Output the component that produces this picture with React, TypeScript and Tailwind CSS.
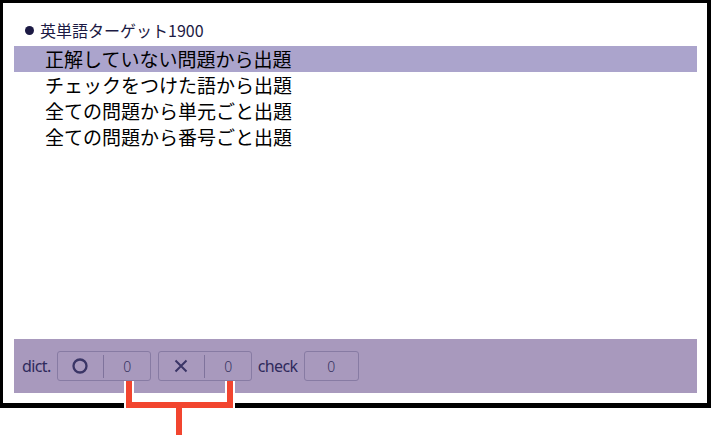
import React from 'react';

const items = [
  '正解していない問題から出題',
  'チェックをつけた語から出題',
  '全ての問題から単元ごと出題',
  '全ての問題から番号ごと出題',
];

const jp = 'font-["Noto_Sans_CJK_JP","Noto_Sans",sans-serif]';

function CountBox({ mark }: { mark?: 'o' | 'x' }) {
  return (
    <div
      className={`flex items-center h-[30px] rounded-[3px] border border-[#877ba3] ${mark ? 'w-[94px]' : 'w-[55px]'}`}
    >
      {mark && (
        <>
          <div className="flex-1 flex items-center justify-center">
            {mark === 'o' ? (
              <svg width="16" height="16" viewBox="0 0 16 16">
                <circle cx="8" cy="8" r="6.5" fill="none" stroke="#3a3566" strokeWidth="2.3" />
              </svg>
            ) : (
              <svg width="16" height="16" viewBox="0 0 16 16">
                <path d="M2.5 2.5 L13.5 13.5 M13.5 2.5 L2.5 13.5" stroke="#3a3566" strokeWidth="2" />
              </svg>
            )}
          </div>
          <div className="w-px h-[23px] bg-[#7f739c]" />
        </>
      )}
      <div className="flex-1 flex items-center justify-center text-[14px] text-[#36325f] font-['Noto_Sans',sans-serif] font-light">
        0
      </div>
    </div>
  );
}

export default function App() {
  return (
    <div className="relative w-[712px] h-[435px] bg-white overflow-hidden">
      <div className="w-[711px] h-[408px] border-black border-l-[3px] border-t-[3px] border-r-4 border-b-[5px] flex flex-col pl-[11px] pr-[10px]">
        <div className={`pt-[16px] h-[38px] flex items-center gap-[6px] pl-[11px] text-[16px] leading-[22px] text-[#1c1a44] ${jp}`}>
          <span className="w-[9px] h-[9px] shrink-0 rounded-full bg-[#1c1a44]" />
          <span>英単語ターゲット1900</span>
        </div>
        <div className="mt-[5px] flex flex-col">
          {items.map((t, i) => (
            <div
              key={t}
              className={`h-[26px] flex items-center pl-[31px] text-[19px] text-black ${jp} ${i === 0 ? 'bg-[#aba4cc]' : ''}`}
            >
              {t}
            </div>
          ))}
        </div>
        <div className="flex-1" />
        <div className="h-[54px] mb-[10px] bg-[#a899bd] flex items-center pl-[8px] text-[16px] text-[#2f2a5c] font-['Noto_Sans',sans-serif] tracking-[-0.6px]">
          <span className="mr-[6px]">dict.</span>
          <CountBox mark="o" />
          <div className="w-[7px]" />
          <CountBox mark="x" />
          <span className="ml-[6px] mr-[6px]">check</span>
          <CountBox />
        </div>
      </div>
      <svg className="absolute left-0 top-0" width="712" height="435" viewBox="0 0 712 435">
        <path d="M129 381 V405 H230 V381 M179 405 V435" fill="none" stroke="#ffffff" strokeWidth="10" />
        <path d="M129 381 V405 H230 V381 M179 405 V435" fill="none" stroke="#f2452f" strokeWidth="6" />
      </svg>
    </div>
  );
}
